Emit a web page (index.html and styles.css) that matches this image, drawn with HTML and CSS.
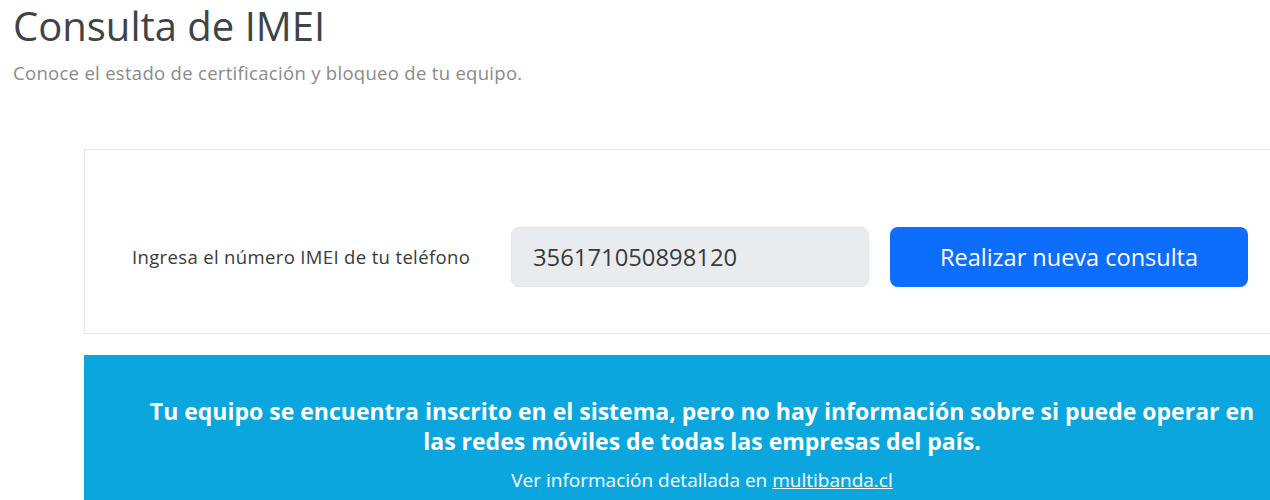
FILE: index.html
```html
<!DOCTYPE html>
<html lang="es">
<head>
<meta charset="utf-8">
<title>Consulta de IMEI</title>
<link rel="stylesheet" href="styles.css">
</head>
<body>
<div class="page">
  <header class="head">
    <h1 class="title">Consulta de IMEI</h1>
    <p class="subtitle">Conoce el estado de certificación y bloqueo de tu equipo.</p>
  </header>
  <section class="card">
    <div class="form-row">
      <label class="label" for="imei">Ingresa el número IMEI de tu teléfono</label>
      <input class="input" id="imei" type="text" value="356171050898120" disabled>
      <button class="btn" type="button">Realizar nueva consulta</button>
    </div>
  </section>
  <section class="alert">
    <p class="alert-main">Tu equipo se encuentra inscrito en el sistema, pero no hay información sobre si puede operar en las redes móviles de todas las empresas del país.</p>
    <p class="alert-sub">Ver información detallada en <a class="alert-link" href="#">multibanda.cl</a></p>
  </section>
</div>
</body>
</html>
```
FILE: styles.css
```css
html, body {
  margin: 0;
  padding: 0;
  background: #ffffff;
  overflow: hidden;
}
body {
  font-family: "Open Sans", "Noto Sans", "Liberation Sans", sans-serif;
  color: #333;
}
.page {
  width: 1400px;
}
.head {
  padding: 0 0 0 13px;
}
.title {
  margin: 0;
  padding-top: 3px;
  font-size: 40px;
  font-weight: 400;
  line-height: 46px;
  color: #404449;
}
.subtitle {
  margin: 11px 0 0 0;
  font-size: 18.5px;
  line-height: 26px;
  color: #8a8a8a;
  letter-spacing: 0.3px;
}
.card {
  margin: 63px 0 0 84px;
  width: 1236px;
  height: 185px;
  box-sizing: border-box;
  border: 1px solid #e4e4e4;
  display: flex;
  align-items: center;
}
.form-row {
  display: flex;
  align-items: center;
  padding-left: 47px;
  margin-top: 31px;
}
.label {
  width: 379px;
  font-size: 18.5px;
  letter-spacing: 0.35px;
  color: #3a3a3a;
  margin-top: -2px;
  white-space: nowrap;
}
.input {
  width: 358px;
  height: 60px;
  box-sizing: border-box;
  border: 1px solid #e0e3e7;
  border-radius: 8px;
  background: #e9ecef;
  padding: 0 0 0 21px;
  font-family: inherit;
  font-size: 23.8px;
  color: #3a3a3a;
  -webkit-text-fill-color: #3a3a3a;
  opacity: 1;
  margin: 0 21px 0 0;
}
.btn {
  width: 358px;
  height: 60px;
  border: none;
  border-radius: 8px;
  background: #0d6efd;
  color: #fff;
  font-family: inherit;
  font-size: 23.5px;
  padding: 0;
}
.alert {
  margin: 21px 0 0 84px;
  width: 1236px;
  height: 200px;
  box-sizing: border-box;
  background: #0ca6de;
  color: #fff;
  text-align: center;
  padding: 41px 0 0;
}
.alert-main {
  margin: 0 auto;
  max-width: 1110px;
  font-size: 23px;
  font-weight: 700;
  line-height: 30px;
}
.alert-sub {
  margin: 11px 0 0;
  font-size: 19px;
  line-height: 26px;
}
.alert-link {
  color: #fff;
  text-decoration: underline;
}
```
